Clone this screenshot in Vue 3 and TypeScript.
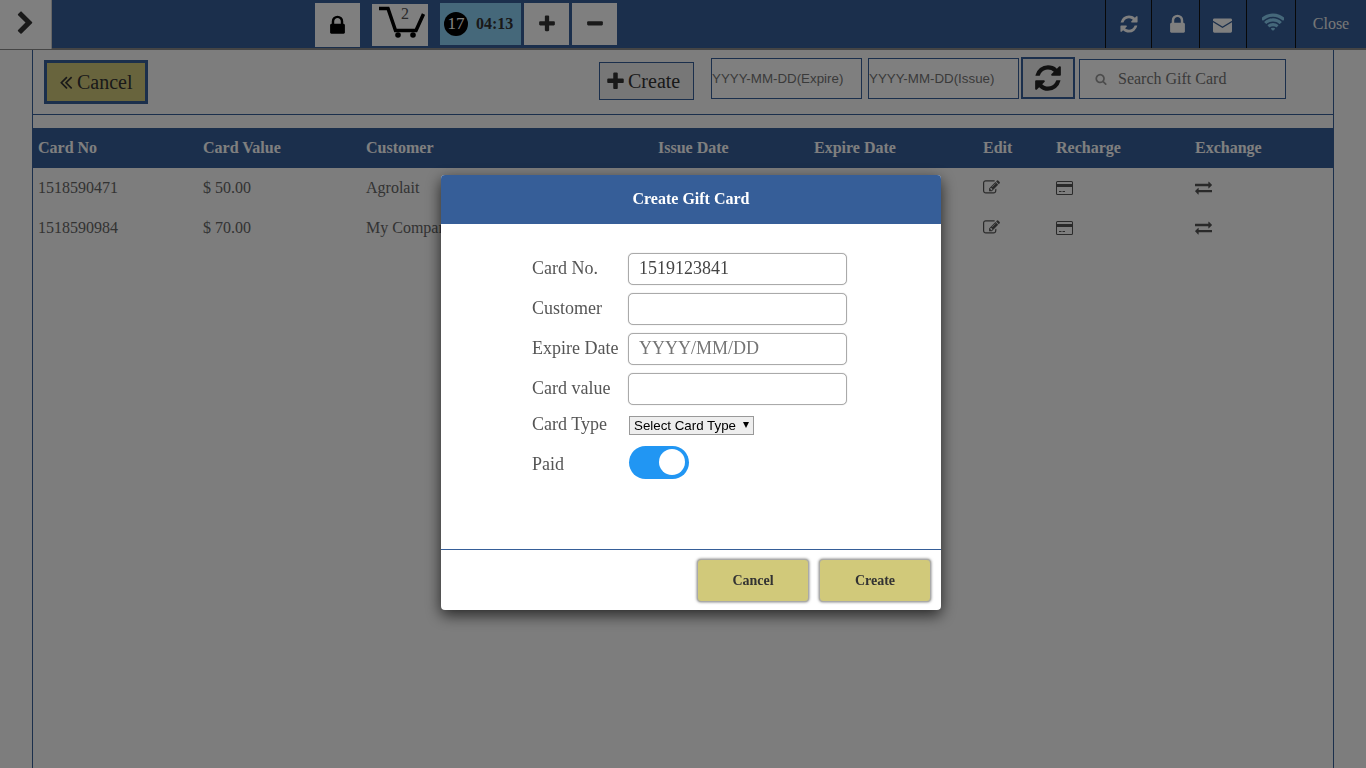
<script setup lang="ts">
interface Card {
  no: string
  value: string
  customer: string
}

const icons = {
  refresh: 'M1639 1056q0 5-1 7-64 268-268 434.5t-478 166.5q-146 0-282.5-55t-243.5-157l-129 129q-19 19-45 19t-45-19-19-45v-448q0-26 19-45t45-19h448q26 0 45 19t19 45-19 45l-137 137q71 66 161 102t187 36q134 0 250-65t186-179q11-17 53-117 8-23 30-23h192q13 0 22.5 9.5t9.5 22.5zm25-800v448q0 26-19 45t-45 19h-448q-26 0-45-19t-19-45 19-45l138-138q-148-137-349-137-134 0-250 65t-186 179q-11 17-53 117-8 23-30 23h-199q-13 0-22.5-9.5t-9.5-22.5v-7q65-268 270-434.5t480-166.5q146 0 284 55.5t245 156.5l130-129q19-19 45-19t45 19 19 45z',
  lock: 'M640 768h512v-192q0-106-75-181t-181-75-181 75-75 181v192zm832 96v576q0 40-28 68t-68 28h-960q-40 0-68-28t-28-68v-576q0-40 28-68t68-28h32v-192q0-184 132-316t316-132 316 132 132 316v192h32q40 0 68 28t28 68z',
  wifi: 'M896 1523q-20 0-93-73.5t-73-93.5q0-32 62.5-54t103.5-22 103.5 22 62.5 54q0 20-73 93.5t-93 73.5zm270-271q-2 0-40-25t-101.5-50-128.5-25-128.5 25-101 50-40.5 25q-18 0-93.5-75t-75.5-93q0-13 10-23 78-77 196-121t233-44 233 44 196 121q10 10 10 23 0 18-75.5 93t-93.5 75zm273-272q-11 0-23-8-136-105-252-154.5t-268-49.5q-85 0-170.5 22t-149 53-113.5 62-79 53-31 22q-17 0-92-75t-75-93q0-12 10-22 132-132 320-205t380-73 380 73 320 205q10 10 10 22 0 18-75 93t-92 75zm271-271q-11 0-22-9-179-157-371.5-236.5t-420.5-79.5-420.5 79.5-371.5 236.5q-11 9-22 9-17 0-92.5-75t-75.5-93q0-13 10-23 187-186 445-288t527-102 527 102 445 288q10 10 10 23 0 18-75.5 93t-92.5 75z',
  edit: 'M888 1184l116-116-152-152-116 116v56h96v96h56zm440-720q-16-16-33 1l-350 350q-17 17-1 33t33-1l350-350q17-17 1-33zm80 594v190q0 119-84.5 203.5t-203.5 84.5h-832q-119 0-203.5-84.5t-84.5-203.5v-832q0-119 84.5-203.5t203.5-84.5h832q63 0 117 25 15 7 18 23 3 17-9 29l-49 49q-14 14-32 8-23-6-45-6h-832q-66 0-113 47t-47 113v832q0 66 47 113t113 47h832q66 0 113-47t47-113v-126q0-13 9-22l64-64q15-15 35-7t20 29zm-96-738l288 288-672 672h-288v-288zm444 132l-92 92-288-288 92-92q28-28 68-28t68 28l152 152q28 28 28 68t-28 68z',
  exchange: 'M1792 1184v192q0 13-9.5 22.5t-22.5 9.5h-1376v192q0 13-9.5 22.5t-22.5 9.5q-12 0-24-10l-319-320q-9-9-9-22 0-14 9-23l320-320q9-9 23-9 13 0 22.5 9.5t9.5 22.5v192h1376q13 0 22.5 9.5t9.5 22.5zm0-544q0 14-9 23l-320 320q-9 9-23 9-13 0-22.5-9.5t-9.5-22.5v-192h-1376q-13 0-22.5-9.5t-9.5-22.5v-192q0-13 9.5-22.5t22.5-9.5h1376v-192q0-14 9-23t23-9q12 0 24 10l319 319q9 9 9 23z',
  search: 'M1216 832q0-185-131.5-316.5t-316.5-131.5-316.5 131.5-131.5 316.5 131.5 316.5 316.5 131.5 316.5-131.5 131.5-316.5zm512 832q0 52-38 90t-90 38q-54 0-90-38l-343-342q-179 124-399 124-143 0-273.5-55.5t-225-150-150-225-55.5-273.5 55.5-273.5 150-225 225-150 273.5-55.5 273.5 55.5 225 150 150 225 55.5 273.5q0 220-124 399l343 343q37 37 37 90z',
  plus: 'M1600 736v192q0 40-28 68t-68 28h-416v416q0 40-28 68t-68 28h-192q-40 0-68-28t-28-68v-416h-416q-40 0-68-28t-28-68v-192q0-40 28-68t68-28h416v-416q0-40 28-68t68-28h192q40 0 68 28t28 68v416h416q40 0 68 28t28 68z',
  minus: 'M1600 736v192q0 40-28 68t-68 28h-1216q-40 0-68-28t-28-68v-192q0-40 28-68t68-28h1216q40 0 68 28t28 68z',
  chevron: 'M1363 877l-742 742q-19 19-45 19t-45-19l-166-166q-19-19-19-45t19-45l531-531-531-531q-19-19-19-45t19-45l166-166q19-19 45-19t45 19l742 742q19 19 19 45t-19 45z',
  angles: 'M1011 1376q0 13-10 23l-50 50q-10 10-23 10t-23-10l-466-466q-10-10-10-23t10-23l466-466q10-10 23-10t23 10l50 50q10 10 10 23t-10 23l-393 393 393 393q10 10 10 23zm384 0q0 13-10 23l-50 50q-10 10-23 10t-23-10l-466-466q-10-10-10-23t10-23l466-466q10-10 23-10t23 10l50 50q10 10 10 23t-10 23l-393 393 393 393q10 10 10 23z',
}

const columns = ['Card No', 'Card Value', 'Customer', 'Issue Date', 'Expire Date', 'Edit', 'Recharge', 'Exchange']

const cards: Card[] = [
  { no: '1518590471', value: '$ 50.00', customer: 'Agrolait' },
  { no: '1518590984', value: '$ 70.00', customer: 'My Company' },
]
</script>

<template>
  <div class="page">
    <header class="topbar">
      <button class="toggle">
        <svg class="chevron" viewBox="0 0 1792 1792"><path :d="icons.chevron" /></svg>
      </button>
      <div class="top-tools">
        <button class="tool lock-tool">
          <svg class="tool-lock" viewBox="0 0 1792 1792"><path :d="icons.lock" /></svg>
        </button>
        <button class="tool cart-tool">
          <svg class="cart" viewBox="0 0 46 32">
            <path d="M0 2.500h9L16.500 24.500H37L44.500 8" fill="none" stroke="#000" stroke-width="3.500" />
            <circle cx="19" cy="29" r="2.800" />
            <circle cx="34" cy="29" r="2.800" />
          </svg>
          <span class="cart-count">2</span>
        </button>
        <div class="timer">
          <span class="timer-badge">17</span>
          <span class="timer-time">04:13</span>
        </div>
        <button class="tool step-tool">
          <svg class="step" viewBox="0 0 1792 1792"><path :d="icons.plus" /></svg>
        </button>
        <button class="tool step-tool">
          <svg class="step" viewBox="0 0 1792 1792"><path :d="icons.minus" /></svg>
        </button>
      </div>
      <nav class="top-right">
        <div class="top-cell w46">
          <svg class="top-refresh" viewBox="0 0 1792 1792"><path :d="icons.refresh" /></svg>
        </div>
        <div class="top-cell w48">
          <svg class="top-lock" viewBox="0 0 1792 1792"><path :d="icons.lock" /></svg>
        </div>
        <div class="top-cell w47">
          <svg class="mail" viewBox="0 0 20 15">
            <path d="M1.500 0h17A1.500 1.500 0 0 1 20 1.500v1L10 8.500 0 2.500v-1A1.500 1.500 0 0 1 1.500 0z" />
            <path d="M0 4l10 6 10-6v9.500a1.500 1.500 0 0 1-1.500 1.500h-17A1.500 1.500 0 0 1 0 13.500z" />
          </svg>
        </div>
        <div class="top-cell w49">
          <svg class="wifi" viewBox="0 0 1792 1792"><path :d="icons.wifi" /></svg>
        </div>
        <div class="top-cell close">Close</div>
      </nav>
    </header>

    <main class="content">
      <section class="toolbar">
        <button class="back-btn">
          <svg class="angles" viewBox="0 0 1792 1792"><path :d="icons.angles" /></svg>
          Cancel
        </button>
        <button class="create-btn">
          <svg class="create-plus" viewBox="0 0 1792 1792"><path :d="icons.plus" /></svg>
          Create
        </button>
        <input class="date-filter" placeholder="YYYY-MM-DD(Expire)" />
        <input class="date-filter issue" placeholder="YYYY-MM-DD(Issue)" />
        <button class="reload-btn">
          <svg class="reload" viewBox="0 0 1792 1792"><path :d="icons.refresh" /></svg>
        </button>
        <div class="search">
          <svg class="search-icon" viewBox="0 0 1792 1792"><path :d="icons.search" /></svg>
          <input class="search-input" placeholder="Search Gift Card" />
        </div>
      </section>

      <section class="table">
        <div class="row head">
          <div v-for="col in columns" :key="col" class="cell">{{ col }}</div>
        </div>
        <div v-for="card in cards" :key="card.no" class="row">
          <div class="cell">{{ card.no }}</div>
          <div class="cell">{{ card.value }}</div>
          <div class="cell">{{ card.customer }}</div>
          <div class="cell"></div>
          <div class="cell"></div>
          <div class="cell">
            <svg class="row-icon" viewBox="0 0 1792 1792"><path :d="icons.edit" /></svg>
          </div>
          <div class="cell">
            <svg class="card-icon" viewBox="0 0 17 14">
              <path d="M1.500 0h14A1.500 1.500 0 0 1 17 1.500v11a1.500 1.500 0 0 1-1.500 1.500h-14A1.500 1.500 0 0 1 0 12.500v-11A1.500 1.500 0 0 1 1.500 0zM1 6v6.500c0 .3.200.5.500.5h14c.3 0 .5-.2.500-.5V6zm0-4.500V3h15V1.500c0-.3-.2-.5-.5-.5h-14c-.3 0-.5.200-.5.500zM3 10h2.500v1H3zm3.500 0H9v1H6.500z" />
            </svg>
          </div>
          <div class="cell">
            <svg class="row-icon" viewBox="0 0 1792 1792"><path :d="icons.exchange" /></svg>
          </div>
        </div>
      </section>
    </main>

    <div class="overlay">
      <div class="modal">
        <div class="modal-head">Create Gift Card</div>
        <div class="modal-body">
          <div class="field">
            <label>Card No.</label>
            <input class="text-input" value="1519123841" />
          </div>
          <div class="field">
            <label>Customer</label>
            <input class="text-input" />
          </div>
          <div class="field">
            <label>Expire Date</label>
            <input class="text-input" placeholder="YYYY/MM/DD" />
          </div>
          <div class="field">
            <label>Card value</label>
            <input class="text-input" />
          </div>
          <div class="field type-field">
            <label>Card Type</label>
            <span class="select-wrap">
              <select class="type-select">
                <option>Select Card Type</option>
              </select>
            </span>
          </div>
          <div class="field paid-field">
            <label>Paid</label>
            <span class="switch"><span class="knob"></span></span>
          </div>
        </div>
        <div class="modal-foot">
          <button class="foot-btn">Cancel</button>
          <button class="foot-btn">Create</button>
        </div>
      </div>
    </div>
  </div>
</template>

<style>
html,
body {
  margin: 0;
  background: #fafafa;
}
</style>

<style scoped>
.page {
  height: 768px;
  overflow: hidden;
  font-family: "Liberation Serif", serif;
  color: #333;
  background: #fafafa;
}

button {
  font-family: inherit;
  padding: 0;
  cursor: pointer;
}

svg {
  display: block;
  fill: currentColor;
}

.topbar {
  height: 48px;
  display: flex;
  background: #365e98;
  border-bottom: 2px solid #8a8a8a;
}

.toggle {
  width: 52px;
  height: 49px;
  flex-shrink: 0;
  background: #fff;
  border: 1px solid #ccc;
  border-width: 0 1px 0 0;
  display: flex;
  align-items: center;
  justify-content: center;
  color: #333;
}

.chevron {
  width: 25px;
  height: 25px;
  margin-top: -3px;
}

.top-tools {
  display: flex;
  margin-left: 263px;
  align-items: flex-start;
}

.tool {
  border: 0;
  background: #fff;
  display: flex;
  align-items: center;
  justify-content: center;
  color: #333;
}

.lock-tool {
  width: 45px;
  height: 44px;
  margin-top: 3px;
}

.tool-lock {
  width: 23px;
  height: 23px;
  color: #000;
}

.cart-tool {
  width: 56px;
  height: 42px;
  margin: 4px 12px 0;
  position: relative;
}

.cart {
  width: 46px;
  height: 32px;
  margin-left: 4px;
  margin-top: -6px;
  fill: #000;
}

.cart-count {
  position: absolute;
  top: 1px;
  left: 29px;
  font-size: 16px;
  color: #555;
}

.timer {
  width: 81px;
  height: 42px;
  margin-top: 3px;
  background: #8ad0f5;
  display: flex;
  align-items: center;
  font-weight: 700;
  font-size: 16px;
}

.timer-badge {
  width: 24px;
  height: 24px;
  margin-left: 4px;
  border-radius: 50%;
  background: #000;
  color: #fff;
  font-weight: 400;
  font-size: 17px;
  display: flex;
  align-items: center;
  justify-content: center;
}

.timer-time {
  margin-left: 8px;
}

.step-tool {
  width: 45px;
  height: 42px;
  margin-top: 3px;
  margin-left: 3px;
}

.step {
  width: 20px;
  height: 20px;
}

.top-right {
  margin-left: auto;
  display: flex;
}

.top-cell {
  height: 48px;
  border-left: 1px solid #111;
  box-sizing: border-box;
  display: flex;
  align-items: center;
  justify-content: center;
  color: #fff;
}

.w46 {
  width: 46px;
}

.w47 {
  width: 47px;
}

.w48 {
  width: 48px;
}

.w49 {
  width: 49px;
}

.top-refresh {
  width: 20px;
  height: 20px;
}

.top-lock {
  width: 23px;
  height: 23px;
  margin-left: 3px;
}

.mail {
  width: 19px;
  height: 15px;
  margin-top: 2px;
  margin-right: 2px;
}

.wifi {
  width: 22px;
  height: 22px;
  color: #8ad0f5;
  margin-top: -2px;
  margin-left: 4px;
}

.close {
  width: 71px;
  font-size: 16px;
  color: #eee;
}

.content {
  width: 1302px;
  box-sizing: border-box;
  height: 718px;
  margin-left: 32px;
  border: 1px solid #365e98;
  border-width: 0 1px;
}

.toolbar {
  height: 65px;
  box-sizing: border-box;
  display: flex;
  align-items: flex-start;
  border-bottom: 1px solid #365e98;
}

.back-btn {
  width: 104px;
  height: 44px;
  margin: 10px 0 0 11px;
  box-sizing: border-box;
  border: 3px solid #365e98;
  padding-left: 8px;
  background: #d1c97a;
  color: #333;
  font-size: 20px;
  display: flex;
  align-items: center;
}

.angles {
  width: 22px;
  height: 22px;
  flex-shrink: 0;
}

.create-btn {
  width: 95px;
  height: 38px;
  margin: 12px 0 0 451px;
  box-sizing: border-box;
  border: 1px solid #365e98;
  padding-left: 5px;
  background: #eee;
  color: #333;
  font-size: 20px;
  display: flex;
  align-items: center;
  gap: 2px;
}

.create-plus {
  width: 21px;
  height: 21px;
  flex-shrink: 0;
}

.date-filter {
  width: 151px;
  height: 41px;
  margin: 8px 0 0 17px;
  box-sizing: border-box;
  border: 1px solid #365e98;
  padding: 0;
  background: #fff;
  font-family: "Liberation Sans", sans-serif;
  font-size: 13.33px;
}

.date-filter.issue {
  margin-left: 6px;
}

.date-filter::placeholder {
  color: #757575;
}

.reload-btn {
  width: 54px;
  height: 42px;
  margin: 7px 0 0 2px;
  box-sizing: border-box;
  border: 2px solid #365e98;
  background: #eee;
  display: flex;
  align-items: center;
  justify-content: center;
  color: #222;
}

.reload {
  width: 30px;
  height: 30px;
}

.search {
  width: 207px;
  height: 40px;
  margin: 9px 0 0 4px;
  box-sizing: border-box;
  border: 1px solid #365e98;
  display: flex;
  align-items: center;
  padding-left: 15px;
  background: #fff;
}

.search-icon {
  width: 12px;
  height: 12px;
  color: #999;
}

.search-input {
  flex: 1;
  min-width: 0;
  border: 0;
  outline: 0;
  margin-left: 11px;
  padding: 0;
  font-family: "Liberation Serif", serif;
  font-size: 16px;
  background: transparent;
}

.search-input::placeholder {
  color: #757575;
}

.table {
  margin-top: 13px;
  margin-left: -1px;
  margin-right: -1px;
}

.row {
  display: grid;
  grid-template-columns: 165px 163px 292px 156px 169px 73px 139px 1fr;
  height: 40px;
  align-items: center;
  font-size: 16px;
  color: #666;
}

.row.head {
  background: #365e98;
  color: #fff;
  font-weight: 700;
}

.cell {
  padding-left: 6px;
}

.row-icon {
  width: 17px;
  height: 17px;
  color: #555;
  margin-top: -2px;
}

.card-icon {
  width: 17px;
  height: 14px;
  color: #555;
  margin-top: -1px;
}

.overlay {
  position: fixed;
  inset: 0;
  background: rgba(0, 0, 0, 0.5);
  padding: 175px 0 0 441px;
}

.modal {
  width: 500px;
  height: 435px;
  display: flex;
  flex-direction: column;
  background: #fff;
  border-radius: 4px;
  box-shadow: 0 5px 15px rgba(0, 0, 0, 0.7);
  overflow: hidden;
}

.modal-head {
  height: 49px;
  box-sizing: border-box;
  padding-bottom: 2px;
  flex-shrink: 0;
  background: #365e98;
  color: #fff;
  font-weight: 700;
  font-size: 16px;
  display: flex;
  align-items: center;
  justify-content: center;
}

.modal-body {
  flex: 1;
  padding: 25px 0 0 91px;
}

.field {
  display: flex;
  align-items: center;
  height: 40px;
  font-size: 18px;
  color: #555;
}

.field label {
  width: 96px;
  flex-shrink: 0;
  margin-top: -2px;
}

.text-input {
  width: 219px;
  height: 32px;
  box-sizing: border-box;
  border: 1px solid #aaa;
  border-radius: 5px;
  padding: 0 10px 2px;
  font-family: "Liberation Serif", serif;
  font-size: 18px;
  color: #444;
  box-shadow: 0 0 1px rgba(0, 0, 0, 0.3);
}

.text-input::placeholder {
  color: #757575;
}

.type-field {
  height: 30px;
}

.type-field label {
  margin-top: 0;
}

.select-wrap {
  position: relative;
  display: block;
  margin-left: 1px;
  margin-top: 2px;
}

.select-wrap::after {
  content: "";
  position: absolute;
  top: 6px;
  right: 5px;
  border-left: 3.500px solid transparent;
  border-right: 3.500px solid transparent;
  border-top: 6px solid #000;
  pointer-events: none;
}

.type-select {
  display: block;
  appearance: none;
  width: 125px;
  height: 19px;
  box-sizing: border-box;
  padding: 0 0 0 4px;
  border: 1px solid #999;
  border-radius: 0;
  background: #eee;
  color: #000;
  font-family: "Liberation Sans", sans-serif;
  font-size: 13.33px;
}

.paid-field {
  margin-top: 5px;
}

.paid-field label {
  margin-top: 0;
}

.switch {
  width: 60px;
  height: 33px;
  margin-left: 1px;
  margin-bottom: 4px;
  border-radius: 17px;
  background: #2196f3;
  display: flex;
  align-items: center;
  justify-content: flex-end;
  padding-right: 4px;
  box-sizing: border-box;
}

.knob {
  width: 26px;
  height: 26px;
  border-radius: 50%;
  background: #fff;
}

.modal-foot {
  height: 61px;
  flex-shrink: 0;
  border-top: 1px solid #365e98;
  display: flex;
  justify-content: flex-end;
  gap: 10px;
  padding: 9px 10px 0 0;
  box-sizing: border-box;
}

.foot-btn {
  width: 112px;
  height: 43px;
  background: #d1c97a;
  border: 1px solid #aaa;
  border-radius: 4px;
  color: #333;
  font-weight: 700;
  font-size: 14px;
  box-shadow: 0 0 3px rgba(0, 0, 0, 0.6);
}
</style>
